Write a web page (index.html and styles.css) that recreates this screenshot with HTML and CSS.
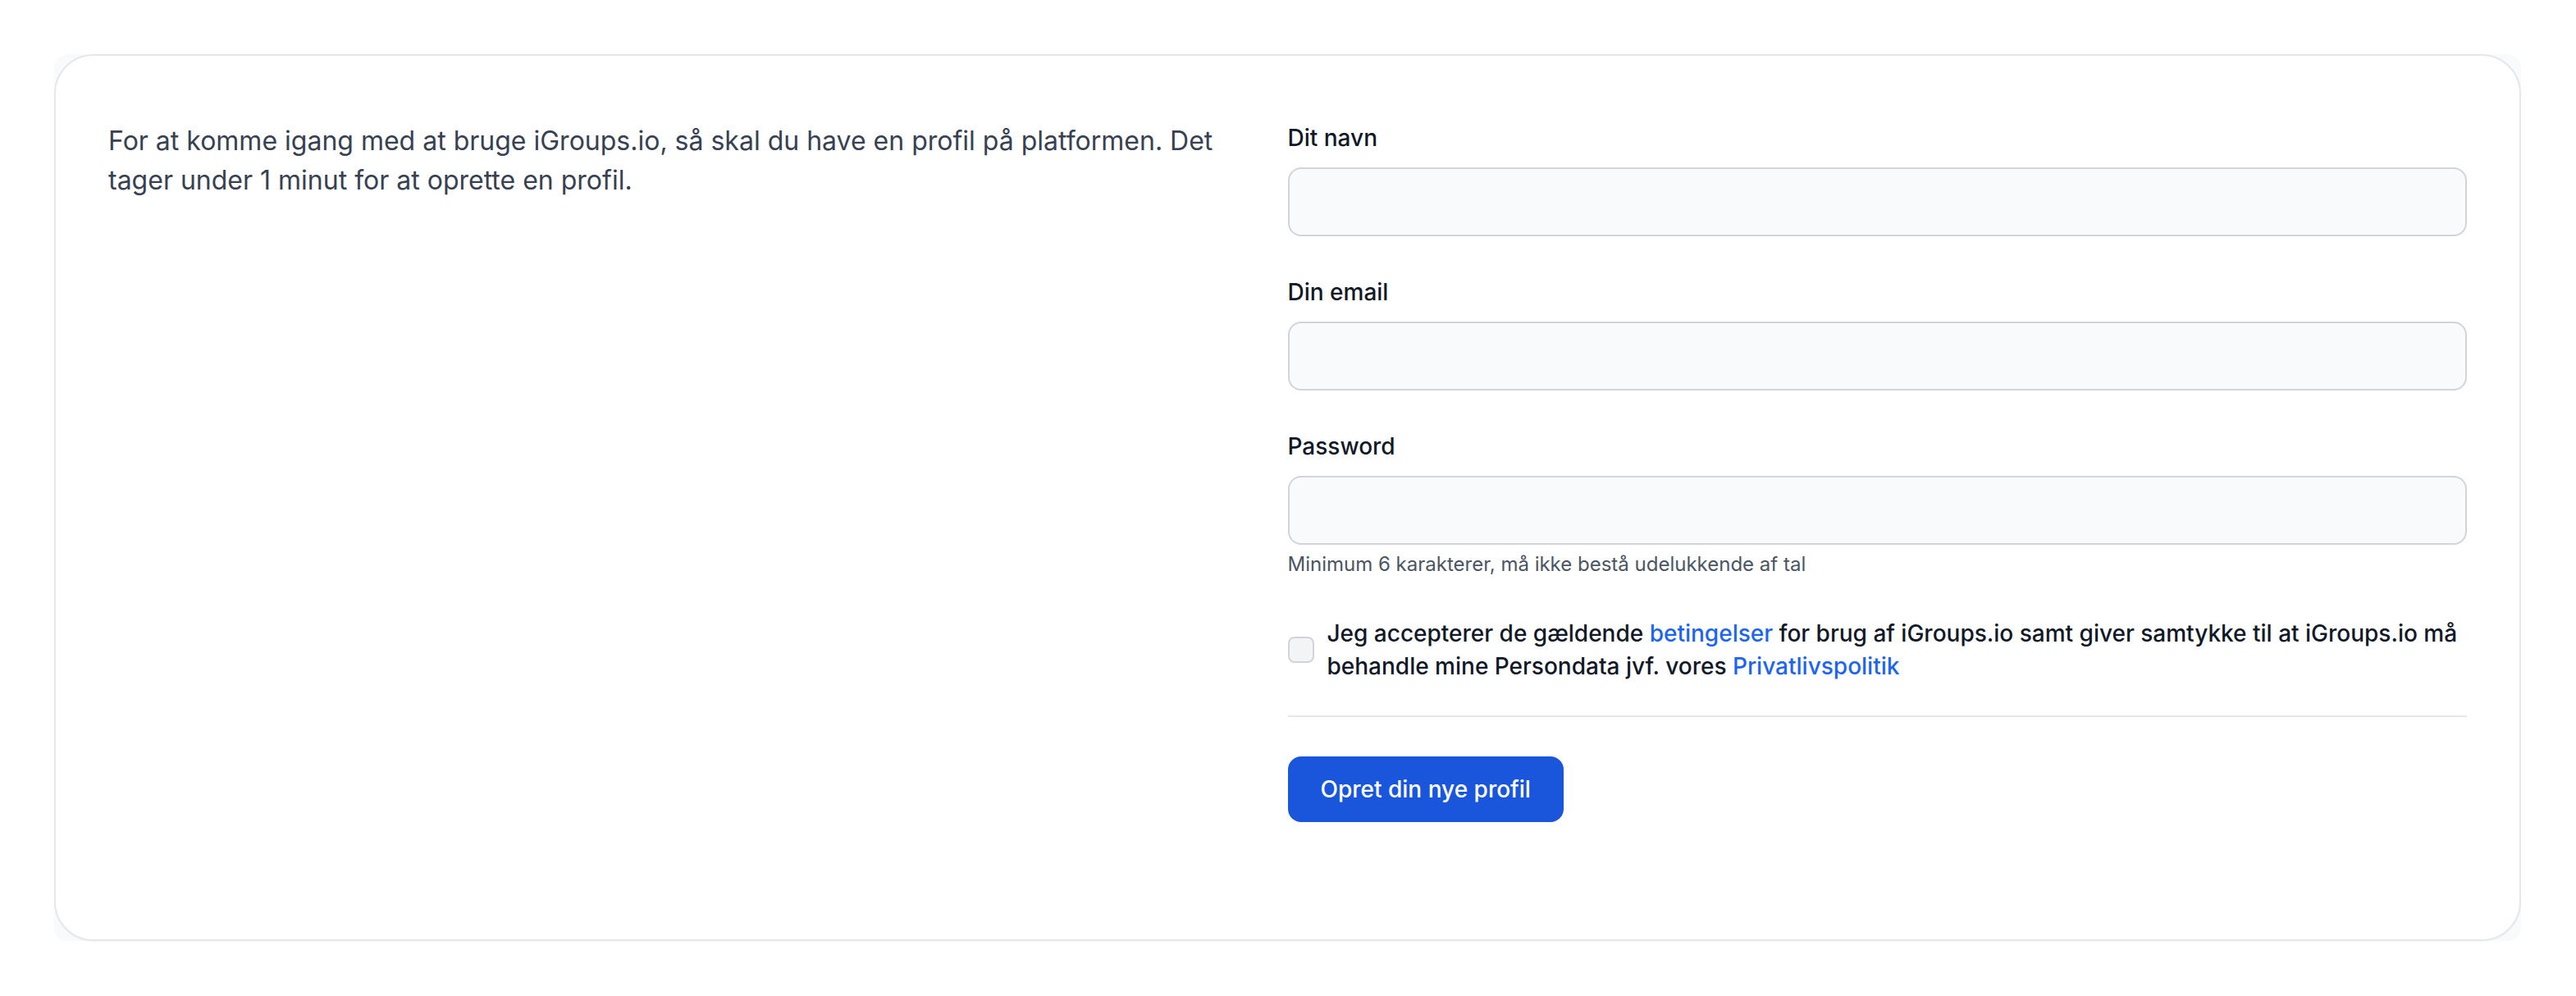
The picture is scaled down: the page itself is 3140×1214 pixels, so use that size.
FILE: index.html
```html
<!DOCTYPE html>
<html lang="da">
<head>
<meta charset="utf-8">
<title>Opret profil</title>
<link rel="stylesheet" href="styles.css">
</head>
<body>
<main class="shell">
  <section class="card">
    <div class="intro">
      <p>For at komme igang med at bruge iGroups.io, så skal du have en profil på platformen. Det tager under 1 minut for at oprette en profil.</p>
    </div>
    <form class="form">
      <div class="field">
        <label class="label" for="name">Dit navn</label>
        <input class="input" id="name" type="text">
      </div>
      <div class="field">
        <label class="label" for="email">Din email</label>
        <input class="input" id="email" type="email">
      </div>
      <div class="field">
        <label class="label" for="password">Password</label>
        <input class="input" id="password" type="password">
        <p class="hint">Minimum 6 karakterer, må ikke bestå udelukkende af tal</p>
      </div>
      <div class="consent">
        <input class="checkbox" id="terms" type="checkbox">
        <label class="consent-text" for="terms">Jeg accepterer de gældende <a href="#" class="link">betingelser</a> for brug af iGroups.io samt giver samtykke til at iGroups.io må behandle mine Persondata jvf. vores <a href="#" class="link">Privatlivspolitik</a></label>
      </div>
      <hr class="divider">
      <div class="actions">
        <button type="button" class="button">Opret din nye profil</button>
      </div>
    </form>
  </section>
</main>
</body>
</html>
```
FILE: styles.css
```css
* {
  box-sizing: border-box;
}

html, body {
  margin: 0;
  padding: 0;
  background: #ffffff;
}

body {
  font-family: Inter, "Noto Sans", "Liberation Sans", sans-serif;
  color: #111827;
  padding: 66px 67px 66px 66px;
}

.shell {
  background: #f9fafb;
  border-radius: 16px;
}

.card {
  background: #ffffff;
  border: 2px solid #e5e7eb;
  border-radius: 48px;
  box-shadow: 0 1px 2px rgba(0, 0, 0, 0.03);
  padding: 80px 64px 143px 64px;
  display: grid;
  grid-template-columns: 1fr 1fr;
}

.intro {
  padding-right: 48px;
}

.intro p {
  margin: 0;
  font-size: 32px;
  line-height: 48px;
  color: #374151;
}

.form {
  display: flex;
  flex-direction: column;
  margin: 0;
}

.field {
  display: flex;
  flex-direction: column;
  margin-bottom: 48px;
}

.label {
  display: block;
  font-size: 28px;
  line-height: 40px;
  font-weight: 500;
  color: #111827;
  margin-bottom: 16px;
}

.input {
  display: block;
  width: 100%;
  height: 84px;
  margin: 0;
  padding: 20px;
  font-family: inherit;
  font-size: 28px;
  line-height: 40px;
  color: #111827;
  background: #f9fafb;
  border: 2px solid #d1d5db;
  border-radius: 16px;
  outline: none;
}

.hint {
  margin: 8px 0 0 0;
  font-size: 24px;
  line-height: 32px;
  color: #4b5563;
}

.consent {
  display: flex;
  align-items: center;
}

.checkbox {
  appearance: none;
  -webkit-appearance: none;
  flex: 0 0 auto;
  width: 32px;
  height: 32px;
  margin: 0;
  background: #f3f4f6;
  border: 2px solid #d1d5db;
  border-radius: 8px;
}

.consent-text {
  margin-left: 16px;
  font-size: 28px;
  line-height: 40px;
  font-weight: 500;
  color: #111827;
}

.link {
  color: #1c64f2;
  text-decoration: none;
}

.divider {
  margin: 40px 0 0 0;
  border: 0;
  height: 2px;
  background: #e5e7eb;
}

.actions {
  margin-top: 48px;
}

.button {
  display: inline-block;
  height: 80px;
  padding: 20px 40px;
  font-family: inherit;
  font-size: 28px;
  line-height: 40px;
  font-weight: 500;
  color: #ffffff;
  background: #1a56db;
  border: 0;
  border-radius: 16px;
  cursor: pointer;
}
```
